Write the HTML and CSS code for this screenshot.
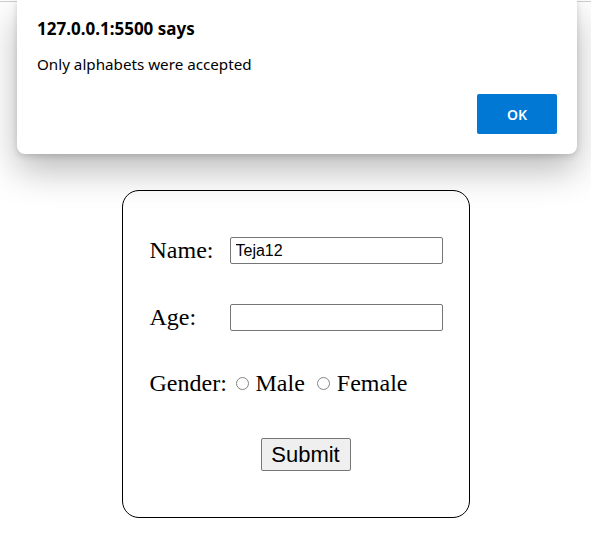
FILE: index.html
```html
<!DOCTYPE html>
<html>
<head>
<meta charset="utf-8">
<link rel="stylesheet" href="styles.css">
</head>
<body>
<div class="topline"></div>
<main class="page">
  <form class="card">
    <div class="row">
      <label class="lbl" for="name">Name:</label>
      <input class="field" id="name" type="text" value="Teja12">
    </div>
    <div class="row second-row">
      <label class="lbl" for="age">Age:</label>
      <input class="field" id="age" type="text">
    </div>
    <div class="row gender">
      <span class="glbl">Gender:</span>
      <span class="radio"></span><span class="opt">Male</span>
      <span class="radio second"></span><span class="opt">Female</span>
    </div>
    <div class="btnrow">
      <button type="button" class="submit">Submit</button>
    </div>
  </form>
</main>
<div class="dialog">
  <div class="dtitle">127.0.0.1:5500 says</div>
  <div class="dmsg">Only alphabets were accepted</div>
  <div class="dactions"><button type="button" class="ok">OK</button></div>
</div>
</body>
</html>
```

FILE: styles.css
```css
html, body {
  margin: 0;
  padding: 0;
  background: #fff;
  font-family: "Liberation Serif", "Times New Roman", serif;
}
.topline {
  height: 1px;
  margin-top: 1px;
  background: #d0d0d0;
}
.page {
  padding-top: 188px;
}
.card {
  width: 348px;
  height: 328px;
  box-sizing: border-box;
  margin: 0 auto;
  border: 1px solid #000;
  border-radius: 17px;
  padding: 46px 0 0 27px;
  color: #000;
}
.row {
  display: flex;
  align-items: center;
  height: 27px;
  margin-bottom: 40px;
}
.row.second-row {
  margin-bottom: 38px;
}
.lbl {
  width: 80px;
  font-size: 24px;
}
.field {
  width: 213px;
  height: 27px;
  box-sizing: border-box;
  margin: 0;
  border: 1px solid #767676;
  border-radius: 2px;
  padding: 1px 5px 0;
  font-family: "Liberation Sans", Arial, sans-serif;
  font-size: 16px;
  color: #000;
  background: #fff;
}
.gender {
  height: 28px;
  margin-bottom: 41px;
  font-size: 24px;
}
.glbl {
  width: 86px;
}
.radio {
  width: 13px;
  height: 13px;
  box-sizing: border-box;
  border: 1px solid #858585;
  border-radius: 50%;
  margin-right: 7px;
  margin-top: 0;
}
.radio.second {
  margin-left: 12px;
}
.btnrow {
  padding-left: 111px;
}
.submit {
  width: 90px;
  height: 33px;
  margin: 0;
  padding: 0;
  border: 1px solid #767676;
  border-radius: 2px;
  background: #efefef;
  font-family: "Liberation Sans", Arial, sans-serif;
  font-size: 22px;
  color: #000;
}
.dialog {
  position: absolute;
  left: 17px;
  top: 0;
  width: 560px;
  height: 154px;
  box-sizing: border-box;
  background: #fff;
  border-radius: 0 0 8px 8px;
  box-shadow: 0 16px 36px rgba(0, 0, 0, 0.28), 0 2px 6px rgba(0, 0, 0, 0.15);
  padding: 18px 20px 0 20px;
  font-family: "Noto Sans", "Open Sans", sans-serif;
  color: #000;
}
.dtitle {
  font-weight: 700;
  font-size: 17px;
  line-height: 22px;
}
.dmsg {
  margin-top: 14px;
  font-size: 15.2px;
  line-height: 20px;
}
.dactions {
  display: flex;
  justify-content: flex-end;
  margin-top: 20px;
}
.ok {
  width: 80px;
  height: 40px;
  border: none;
  border-radius: 2px;
  background: #0078d4;
  color: #fff;
  font-family: "Noto Sans", "Open Sans", sans-serif;
  font-weight: 600;
  font-size: 14px;
}
```
